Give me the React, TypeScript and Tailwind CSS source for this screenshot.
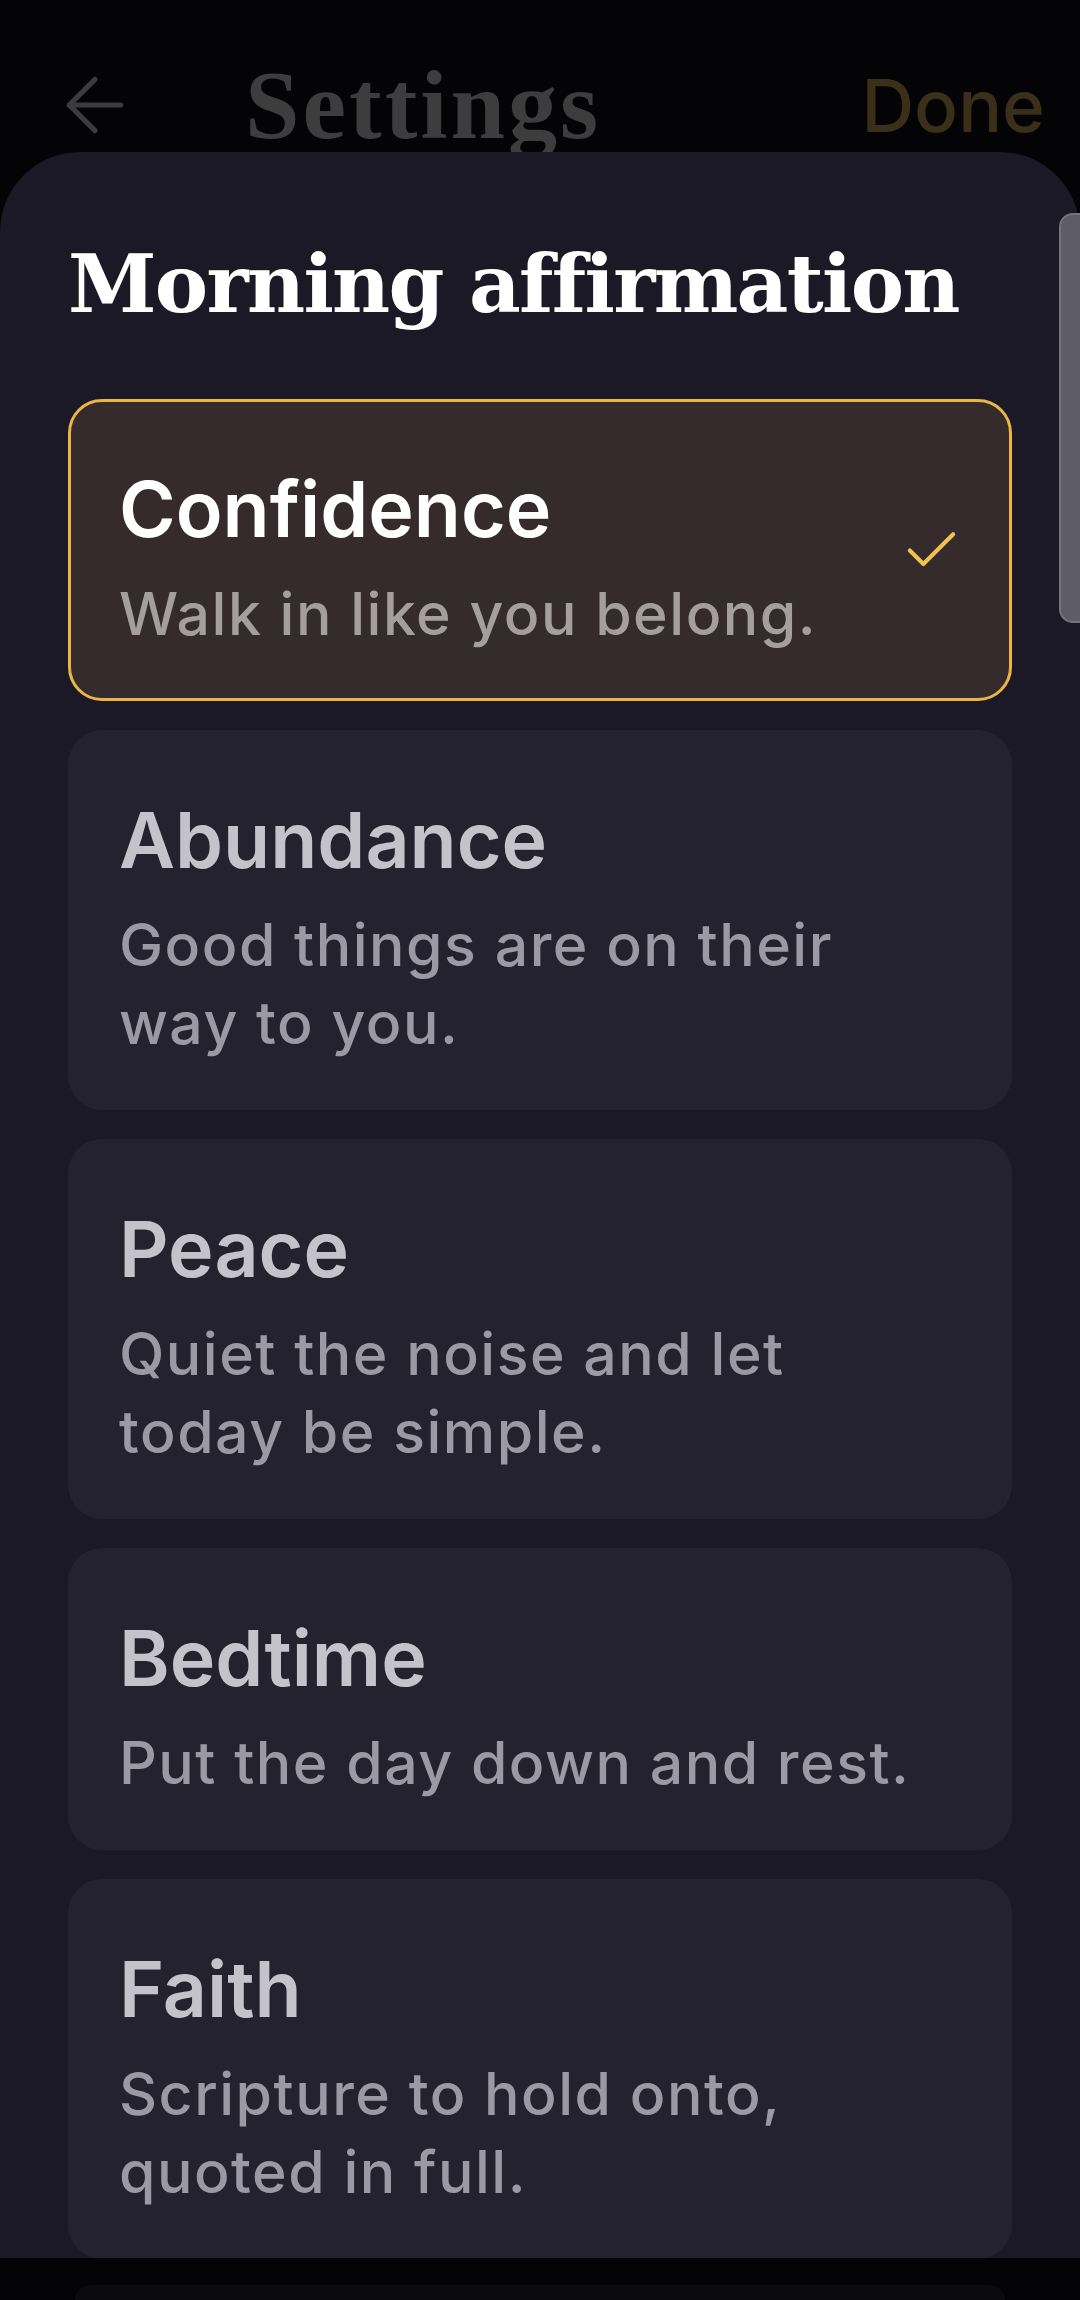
import { ArrowLeft, Check } from 'lucide-react';

interface Affirmation {
  title: string;
  text: string;
}

const affirmations: Affirmation[] = [
  { title: 'Confidence', text: 'Walk in like you belong.' },
  { title: 'Abundance', text: 'Good things are on their way to you.' },
  { title: 'Peace', text: 'Quiet the noise and let today be simple.' },
  { title: 'Bedtime', text: 'Put the day down and rest.' },
  { title: 'Faith', text: 'Scripture to hold onto, quoted in full.' },
];

const sans = "font-['Inter','Noto_Sans',sans-serif]";

function OptionCard({ item, selected }: { item: Affirmation; selected: boolean }) {
  return (
    <div
      className={`flex items-center rounded-[34px] border-[3px] pl-[48px] pr-[45px] pt-[61px] pb-[45px] ${
        selected ? 'border-[#e9b545] bg-[#352b2c]' : 'border-transparent bg-[#25222f]'
      }`}
    >
      <div className="flex min-w-0 flex-1 flex-col">
        <div
          className={`${sans} text-[77px] font-semibold leading-[92px] ${
            selected ? 'text-white' : 'text-[#c4c3cb]'
          }`}
        >
          {item.title}
        </div>
        <div
          className={`${sans} mt-[20px] text-[59px] font-medium leading-[78px] tracking-[1.5px] ${
            selected ? 'text-[#a49f9d]' : 'text-[#9b99a3]'
          }`}
        >
          {item.text}
        </div>
      </div>
      {selected && <Check size={65} strokeWidth={1.5} className="mb-[16px] shrink-0 text-[#f2c14e]" />}
    </div>
  );
}

export default function App() {
  return (
    <div className="relative flex h-[2300px] w-[1080px] flex-col overflow-hidden bg-[#040306]">
      {/* top bar, partly hidden behind the sheet */}
      <div className="flex h-[152px] shrink-0 items-start">
        <ArrowLeft size={88} strokeWidth={1.4} className="ml-[51px] mt-[61px] shrink-0 text-[#3c3c3c]" />
        <div className="ml-[106px] mt-[50px] font-['Liberation_Serif','DejaVu_Serif',serif] text-[98px] font-bold leading-[110px] tracking-[3px] text-[#3d3d3d]">
          Settings
        </div>
        <div className={`${sans} ml-auto mr-[35px] mt-[62px] text-[73px] font-medium leading-[88px] text-[#3b2f19]`}>
          Done
        </div>
      </div>

      {/* bottom sheet */}
      <div className="relative z-10 h-[2106px] shrink-0 overflow-hidden rounded-t-[80px] bg-[#1b1925] px-[68px] pt-[82px]">
        <h1 className="whitespace-nowrap font-['DejaVu_Serif','Liberation_Serif',serif] text-[80px] font-bold leading-[100px] tracking-[-1.7px] text-white">
          Morning affirmation
        </h1>
        <div className="mt-[65px] flex flex-col gap-[29px]">
          {affirmations.map((a, i) => (
            <OptionCard key={a.title} item={a} selected={i === 0} />
          ))}
        </div>
      </div>

      <div className="mx-[75px] mt-[27px] h-[30px] rounded-t-[40px] bg-[#0b0a0d]" />

      {/* scrollbar thumb */}
      <div className="absolute right-[-4px] top-[213px] z-20 h-[410px] w-[25px] rounded-l-[14px] border-2 border-[#74727c] bg-[#5e5c67]" />
    </div>
  );
}
